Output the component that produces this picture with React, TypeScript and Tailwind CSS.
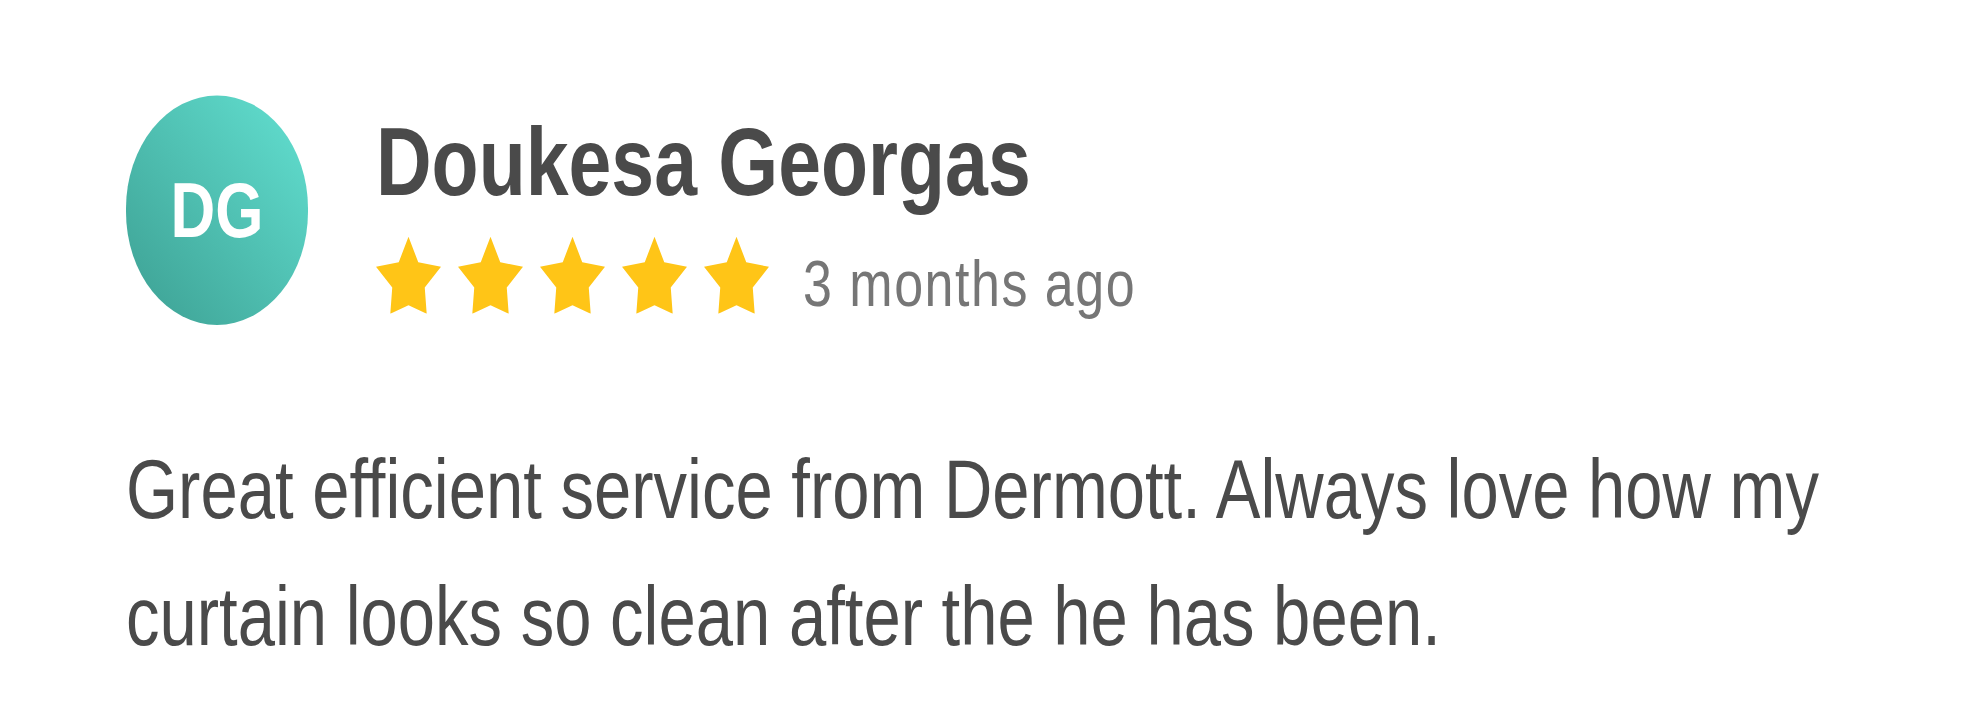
import type { ReactNode } from 'react'

const font = { fontFamily: '"Liberation Sans", Arial, sans-serif' }

function Star() {
  return (
    <svg width={65} height={62} viewBox="0 0 100 100" preserveAspectRatio="none" aria-hidden>
      <polygon fill="#ffc517" points="50,0 65,33 100,39 75,66 78,100 50,89 22,100 25,66 0,39 35,33" />
    </svg>
  )
}

function Avatar({ children }: { children: ReactNode }) {
  return (
    <div className="flex h-[185px] w-[182px] shrink-0 items-center justify-center rounded-full bg-linear-to-tr from-[#3c9f92] to-[#63e1d2] text-[62px] font-bold leading-none text-white">
      {children}
    </div>
  )
}

export default function App() {
  return (
    <div className="min-h-screen bg-white">
      {/* the reference is stretched vertically, so the whole card is scaled on y */}
      <div className="origin-top-left scale-y-[1.24] pl-[126px] pt-[77px]" style={font}>
        <div className="flex items-start gap-[68px]">
          <Avatar>DG</Avatar>
          <div className="mt-[15px]">
            <h1 className="whitespace-nowrap text-[77px] font-bold leading-none text-[#4a4a4a]">Doukesa Georgas</h1>
            <div className="mt-[22px] flex items-start">
              <div className="flex gap-[17px]">
                {[0, 1, 2, 3, 4].map((i) => (
                  <Star key={i} />
                ))}
              </div>
              <span className="ml-[34px] mt-[12px] whitespace-nowrap text-[52px] leading-none tracking-[1.5px] text-[#767676]">
                3 months ago
              </span>
            </div>
          </div>
        </div>
        <p className="mt-[82px] whitespace-nowrap text-[67px] leading-[102px] text-[#4a4a4a]">
          Great efficient service from Dermott. Always love how my
          <br />
          curtain looks so clean after the he has been.
        </p>
      </div>
    </div>
  )
}
